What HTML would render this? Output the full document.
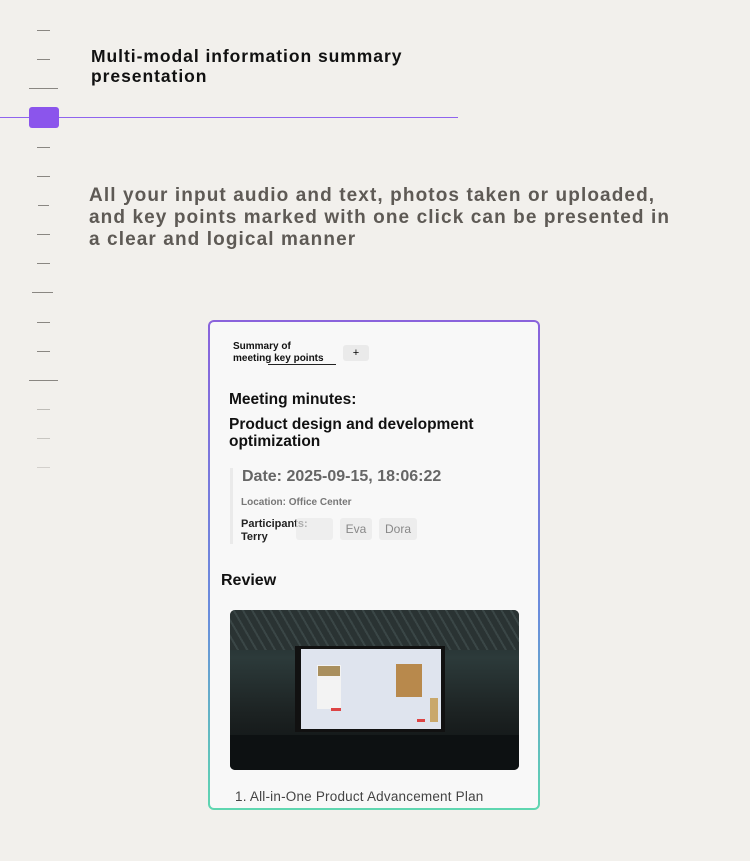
<!DOCTYPE html>
<html><head><meta charset="utf-8"><style>
*{margin:0;padding:0;box-sizing:border-box}
body{width:750px;height:861px;background:#f2f0ec;font-family:"Liberation Sans",sans-serif;position:relative;overflow:hidden}
.t{position:absolute;height:1px;background:#8a8782}
.a{position:absolute;white-space:nowrap}
</style></head><body>
<div class="t" style="left:37px;top:30px;width:13px"></div>
<div class="t" style="left:37px;top:59px;width:13px"></div>
<div class="t" style="left:29px;top:88px;width:29px"></div>
<div class="a" style="left:0;top:117px;width:458px;height:1px;background:#8f64ee"></div>
<div class="a" style="left:29px;top:107px;width:30px;height:21px;background:#8b55ec;border-radius:3px"></div>
<div class="t" style="left:37px;top:147px;width:13px"></div>
<div class="t" style="left:37px;top:176px;width:13px"></div>
<div class="t" style="left:38px;top:205px;width:11px"></div>
<div class="t" style="left:37px;top:234px;width:13px"></div>
<div class="t" style="left:37px;top:263px;width:13px"></div>
<div class="t" style="left:32px;top:292px;width:21px"></div>
<div class="t" style="left:37px;top:322px;width:13px"></div>
<div class="t" style="left:37px;top:351px;width:13px"></div>
<div class="t" style="left:29px;top:380px;width:29px"></div>
<div class="t" style="left:37px;top:409px;width:13px;opacity:.5"></div>
<div class="t" style="left:37px;top:438px;width:13px;opacity:.4"></div>
<div class="t" style="left:37px;top:467px;width:13px;opacity:.3"></div>

<div class="a" style="left:91px;top:46px;font-size:17.5px;font-weight:bold;line-height:20px;color:#111;letter-spacing:0.95px">Multi-modal information summary<br>presentation</div>
<div class="a" style="left:89px;top:185px;font-size:19px;font-weight:bold;line-height:22px;color:#5e5a55;letter-spacing:1.1px">All your input audio and text, photos taken or uploaded,<br>and key points marked with one click can be presented in<br>a clear and logical manner</div>

<div class="a" style="left:208px;top:320px;width:332px;height:490px;border-radius:6px;padding:2px;background:linear-gradient(180deg,#8a63dc,#6a8ddc 60%,#5fd6b0)">
<div style="width:100%;height:100%;background:#f8f8f8;border-radius:4px;position:relative">
<div class="a" style="left:23px;top:19px;font-size:10px;font-weight:bold;line-height:12px;color:#111">Summary of<br>meeting key points</div>
<div class="a" style="left:58px;top:42px;width:68px;height:1px;background:#222"></div>
<div class="a" style="left:133px;top:23px;width:26px;height:16px;background:#eaeaea;border-radius:3px;font-size:11px;text-align:center;line-height:16px">+</div>
<div class="a" style="left:19px;top:69px;font-size:15.5px;font-weight:bold;color:#111">Meeting minutes:</div>
<div class="a" style="left:19px;top:94px;font-size:15.5px;font-weight:bold;line-height:17px;color:#111">Product design and development<br>optimization</div>
<div class="a" style="left:20px;top:146px;width:3px;height:76px;background:#eaeaea"></div>
<div class="a" style="left:32px;top:146px;font-size:16px;font-weight:bold;color:#666">Date: 2025-09-15, 18:06:22</div>
<div class="a" style="left:31px;top:175px;font-size:10px;font-weight:bold;color:#777">Location: Office Center</div>
<div class="a" style="left:31px;top:196px;font-size:11px;font-weight:bold;line-height:13px;color:#222">Participants:<br>Terry</div>
<div class="a" style="left:86px;top:196px;width:37px;height:22px;background:#e9e9e9;border-radius:3px;opacity:.7"></div>
<div class="a" style="left:130px;top:196px;width:32px;height:22px;background:#ededed;border-radius:3px;font-size:12px;color:#888;text-align:center;line-height:22px">Eva</div>
<div class="a" style="left:169px;top:196px;width:38px;height:22px;background:#ededed;border-radius:3px;font-size:12px;color:#888;text-align:center;line-height:22px">Dora</div>
<div class="a" style="left:11px;top:250px;font-size:16px;font-weight:bold;color:#111">Review</div>
<div class="a" style="left:20px;top:288px;width:289px;height:160px;border-radius:5px;overflow:hidden;background:linear-gradient(180deg,#1e2628 0%,#2c3a3a 30%,#1c2222 65%,#0c0f10 100%)">
<div class="a" style="left:0;top:0;width:289px;height:40px;background:repeating-linear-gradient(60deg,#2a3333 0 6px,#3a4646 6px 8px)"></div>
<div class="a" style="left:65px;top:36px;width:150px;height:86px;background:#111"></div>
<div class="a" style="left:71px;top:39px;width:140px;height:80px;background:#dfe4ee"></div>
<div class="a" style="left:87px;top:55px;width:24px;height:44px;background:#f3f3f3"></div>
<div class="a" style="left:88px;top:56px;width:22px;height:10px;background:#a98f5e"></div>
<div class="a" style="left:166px;top:54px;width:26px;height:33px;background:#b8894c"></div>
<div class="a" style="left:101px;top:98px;width:10px;height:3px;background:#d44"></div>
<div class="a" style="left:187px;top:109px;width:8px;height:3px;background:#d44"></div>
<div class="a" style="left:200px;top:88px;width:8px;height:24px;background:#c9a86b"></div>
<div class="a" style="left:0;top:125px;width:289px;height:35px;background:#0d1112"></div>
</div>
<div class="a" style="left:25px;top:467px;font-size:13.5px;color:#444;letter-spacing:0.2px">1. All-in-One Product Advancement Plan</div>
</div></div>
</body></html>
